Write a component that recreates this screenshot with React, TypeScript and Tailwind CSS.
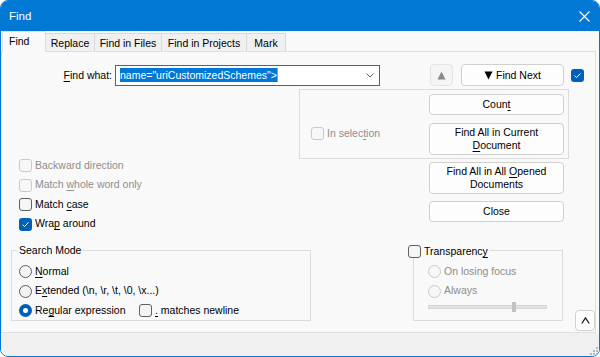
import React from "react";

const F = "font-['Liberation_Sans',Arial,sans-serif]";

function Check({ checked = false, disabled = false }: { checked?: boolean; disabled?: boolean }) {
  if (checked) {
    return (
      <span className="w-[13px] h-[13px] shrink-0 rounded-[3px] bg-[#005fb8] flex items-center justify-center">
        <svg width="9" height="9" viewBox="0 0 9 9">
          <path d="M1.6 4.7 L3.6 6.6 L7.4 2.4" stroke="white" strokeWidth="1" fill="none" />
        </svg>
      </span>
    );
  }
  return (
    <span
      className={
        disabled
          ? "w-[13px] h-[13px] shrink-0 rounded-[3px] border border-[#cacaca] bg-[#f7f7f7]"
          : "w-[13px] h-[13px] shrink-0 rounded-[3px] border border-[#5f5f5f] bg-[#f5f5f5]"
      }
    />
  );
}

function Radio({ checked = false, disabled = false }: { checked?: boolean; disabled?: boolean }) {
  if (checked) {
    return (
      <span className="w-[13px] h-[13px] shrink-0 rounded-full bg-[#005fb8] flex items-center justify-center">
        <span className="w-[5px] h-[5px] rounded-full bg-white" />
      </span>
    );
  }
  return (
    <span
      className={
        disabled
          ? "w-[13px] h-[13px] shrink-0 rounded-full border border-[#cacaca] bg-[#f7f7f7]"
          : "w-[13px] h-[13px] shrink-0 rounded-full border border-[#5f5f5f] bg-[#f3f3f3]"
      }
    />
  );
}

function Btn({ children, tall = false }: { children: React.ReactNode; tall?: boolean }) {
  return (
    <div
      className={
        tall
          ? "w-[135px] h-[32px] rounded-[4px] border border-[#d0d0d0] bg-[#fdfdfd] flex items-center justify-center text-center leading-[13px]"
          : "w-[135px] h-[21px] rounded-[4px] border border-[#d0d0d0] bg-[#fdfdfd] flex items-center justify-center text-center leading-[13px]"
      }
    >
      {children}
    </div>
  );
}

function Tab({ label, w, selected = false }: { label: string; w: string; selected?: boolean }) {
  if (selected) {
    return (
      <div className="relative z-10 ml-[1px] w-[44px] h-[21px] -mb-[1px] border-l border-t border-r border-[#dfdfdf] bg-[#f9f9f9] pl-[6px] pt-[2px] leading-[14px]">
        {label}
      </div>
    );
  }
  return (
    <div className={w + " h-[18px] border-t border-r border-[#d9d9d9] bg-[#f0f0f0] flex items-center justify-center leading-[14px]"}>
      {label}
    </div>
  );
}

export default function App() {
  return (
    <div className="w-[600px] h-[357px] bg-white">
      <div className={"w-[600px] h-[357px] border border-[#0078d4] rounded-[8px] overflow-hidden flex flex-col bg-[#f9f9f9] text-black text-[10.5px] " + F}>
        {/* title bar */}
        <div className="h-[30px] shrink-0 bg-[#0078d4] flex items-center justify-between pl-[8px] pr-[9px]">
          <span className="text-white text-[11.5px] leading-[16px]">Find</span>
          <svg width="11" height="11" viewBox="0 0 11 11">
            <path d="M0.5 0.5L10.5 10.5M10.5 0.5L0.5 10.5" stroke="white" strokeWidth="1.1" />
          </svg>
        </div>

        {/* tabs */}
        <div className="h-[20px] shrink-0 flex items-end">
          <Tab label="Find" w="" selected />
          <Tab label="Replace" w="w-[49px]" />
          <Tab label="Find in Files" w="w-[67px]" />
          <Tab label="Find in Projects" w="w-[85px]" />
          <Tab label="Mark" w="w-[39px]" />
        </div>

        {/* panel */}
        <div className="relative h-[282px] w-[595px] shrink-0 border border-[#dfdfdf] bg-[#f9f9f9] flex flex-col">
          {/* row 1 */}
          <div className="mt-[12px] h-[22px] flex items-center">
            <div className="w-[110px] text-right leading-[14px]">
              <u className="underline-offset-[2px]">F</u>ind what:
            </div>
            <div className="ml-[3px] w-[265px] h-[21px] border border-[#0078d4] bg-white flex items-center pl-[4px] pr-[5px]">
              <span className="h-[14px] leading-[14px] bg-[#0078d7] text-white border-r border-[#e88a2e] whitespace-pre">
                name="uriCustomizedSchemes"&gt;
              </span>
              <span className="flex-1" />
              <svg width="8" height="5" viewBox="0 0 8 5">
                <path d="M0.5 0.5L4 4L7.5 0.5" stroke="#606060" strokeWidth="1" fill="none" />
              </svg>
            </div>
            <div className="ml-[50px] w-[23px] h-[22px] rounded-[4px] border border-[#e3e3e3] bg-[#f5f5f5] flex items-center justify-center">
              <svg width="9" height="9" viewBox="0 0 9 9">
                <path d="M4.5 0.5L8.5 8.5H0.5Z" fill="#8a8a8a" />
              </svg>
            </div>
            <div className="ml-[8px] w-[103px] h-[22px] rounded-[4px] border border-[#d0d0d0] bg-[#fdfdfd] flex items-center justify-center gap-[3px] leading-[14px]">
              <svg width="9" height="9" viewBox="0 0 9 9">
                <path d="M0.5 0.5H8.5L4.5 8.5Z" fill="#000" />
              </svg>
              <span>Find Next</span>
            </div>
            <div className="ml-[7px]">
              <Check checked />
            </div>
          </div>

          {/* row 2 */}
          <div className="mt-[3px] flex">
            <div className="w-[297px] pt-[67px] pl-[17px] flex flex-col">
              <div className="h-[19.5px] flex items-center gap-[3px] text-[#8d8d8d]">
                <Check disabled />
                <span>Backward direction</span>
              </div>
              <div className="h-[19.5px] flex items-center gap-[3px] text-[#8d8d8d]">
                <Check disabled />
                <span>
                  Match <u className="underline-offset-[2px]">w</u>hole word only
                </span>
              </div>
              <div className="h-[19.5px] flex items-center gap-[3px]">
                <Check />
                <span>
                  Match <u className="underline-offset-[2px]">c</u>ase
                </span>
              </div>
              <div className="h-[19.5px] flex items-center gap-[3px]">
                <Check checked />
                <span>
                  Wra<u className="underline-offset-[2px]">p</u> around
                </span>
              </div>
            </div>
            <div className="flex flex-col">
              <div className="w-[270px] h-[70px] border border-[#dcdcdc] flex">
                <div className="w-[129px] pl-[11px] pt-[37px]">
                  <div className="flex items-center gap-[3px] text-[#8d8d8d] h-[13px]">
                    <Check disabled />
                    <span>
                      In selec<u className="underline-offset-[2px]">t</u>ion
                    </span>
                  </div>
                </div>
                <div className="pt-[4px] flex flex-col gap-[8px]">
                  <Btn>
                    <span>
                      Coun<u className="underline-offset-[2px]">t</u>
                    </span>
                  </Btn>
                  <Btn tall>
                    <span>
                      Find All in Current
                      <br />
                      <u className="underline-offset-[2px]">D</u>ocument
                    </span>
                  </Btn>
                </div>
              </div>
              <div className="ml-[130px] mt-[3px] flex flex-col gap-[7px]">
                <Btn tall>
                  <span>
                    Find All in All <u className="underline-offset-[2px]">O</u>pened
                    <br />
                    Documents
                  </span>
                </Btn>
                <Btn>Close</Btn>
              </div>
            </div>
          </div>

          {/* row 3 */}
          <div className="mt-[16px] flex items-start">
            <div className="relative ml-[9px] w-[300px] h-[71px] border border-[#dcdcdc]">
              <div className="absolute left-[5px] top-[-8px] px-[2px] bg-[#f9f9f9] leading-[14px]">Search Mode</div>
              <div className="pt-[11px] pl-[7px] flex flex-col">
                <div className="h-[19.5px] flex items-center gap-[3px]">
                  <Radio />
                  <span>
                    <u className="underline-offset-[2px]">N</u>ormal
                  </span>
                </div>
                <div className="h-[19.5px] flex items-center gap-[3px]">
                  <Radio />
                  <span>
                    E<u className="underline-offset-[2px]">x</u>tended (\n, \r, \t, \0, \x...)
                  </span>
                </div>
                <div className="h-[19.5px] flex items-center">
                  <Radio checked />
                  <span className="ml-[3px] w-[104px]">
                    Re<u className="underline-offset-[2px]">g</u>ular expression
                  </span>
                  <Check />
                  <span className="ml-[3px]">
                    <u className="underline-offset-[2px]">.</u> matches newline
                  </span>
                </div>
              </div>
            </div>

            <div className="relative ml-[102px] w-[150px] h-[71px] border border-[#dcdcdc]">
              <div className="absolute left-[-8px] top-[-7px] pl-[2px] pr-[2px] bg-[#f9f9f9] flex items-center gap-[3px] h-[14px]">
                <Check />
                <span className="leading-[14px]">
                  Transparenc<u className="underline-offset-[2px]">y</u>
                </span>
              </div>
              <div className="pt-[11px] pl-[14px] flex flex-col text-[#8d8d8d]">
                <div className="h-[19.5px] flex items-center gap-[3px]">
                  <Radio disabled />
                  <span>On losing focus</span>
                </div>
                <div className="h-[19.5px] flex items-center gap-[3px]">
                  <Radio disabled />
                  <span>Always</span>
                </div>
                <div className="relative mt-[1px] w-[119px] h-[10px] flex items-center">
                  <div className="w-full h-[4px] bg-[#e3e3e3] border border-[#d6d6d6]" />
                  <div className="absolute left-[84px] top-0 w-[4px] h-[10px] bg-[#c2c2c2]" />
                </div>
              </div>
            </div>

            <div className="ml-[12px] mt-[60px] w-[20px] h-[21px] rounded-[4px] border border-[#d0d0d0] bg-[#fdfdfd] flex items-center justify-center">
              <svg width="9" height="7" viewBox="0 0 9 7">
                <path d="M0.8 6.5L4.5 0.8L8.2 6.5" stroke="#1a1a1a" strokeWidth="1.2" fill="none" />
              </svg>
            </div>
          </div>
        </div>

        {/* bottom strip */}
        <div className="flex-1 bg-[#f0f0f0] flex justify-end items-end pr-[1px] pb-[1px]">
          <svg width="8" height="8" viewBox="0 0 8 8">
            <rect x="6" y="0" width="2" height="2" fill="#b8b8b8" />
            <rect x="3" y="3" width="2" height="2" fill="#b8b8b8" />
            <rect x="6" y="3" width="2" height="2" fill="#b8b8b8" />
            <rect x="0" y="6" width="2" height="2" fill="#b8b8b8" />
            <rect x="3" y="6" width="2" height="2" fill="#b8b8b8" />
            <rect x="6" y="6" width="2" height="2" fill="#b8b8b8" />
          </svg>
        </div>
      </div>
    </div>
  );
}
